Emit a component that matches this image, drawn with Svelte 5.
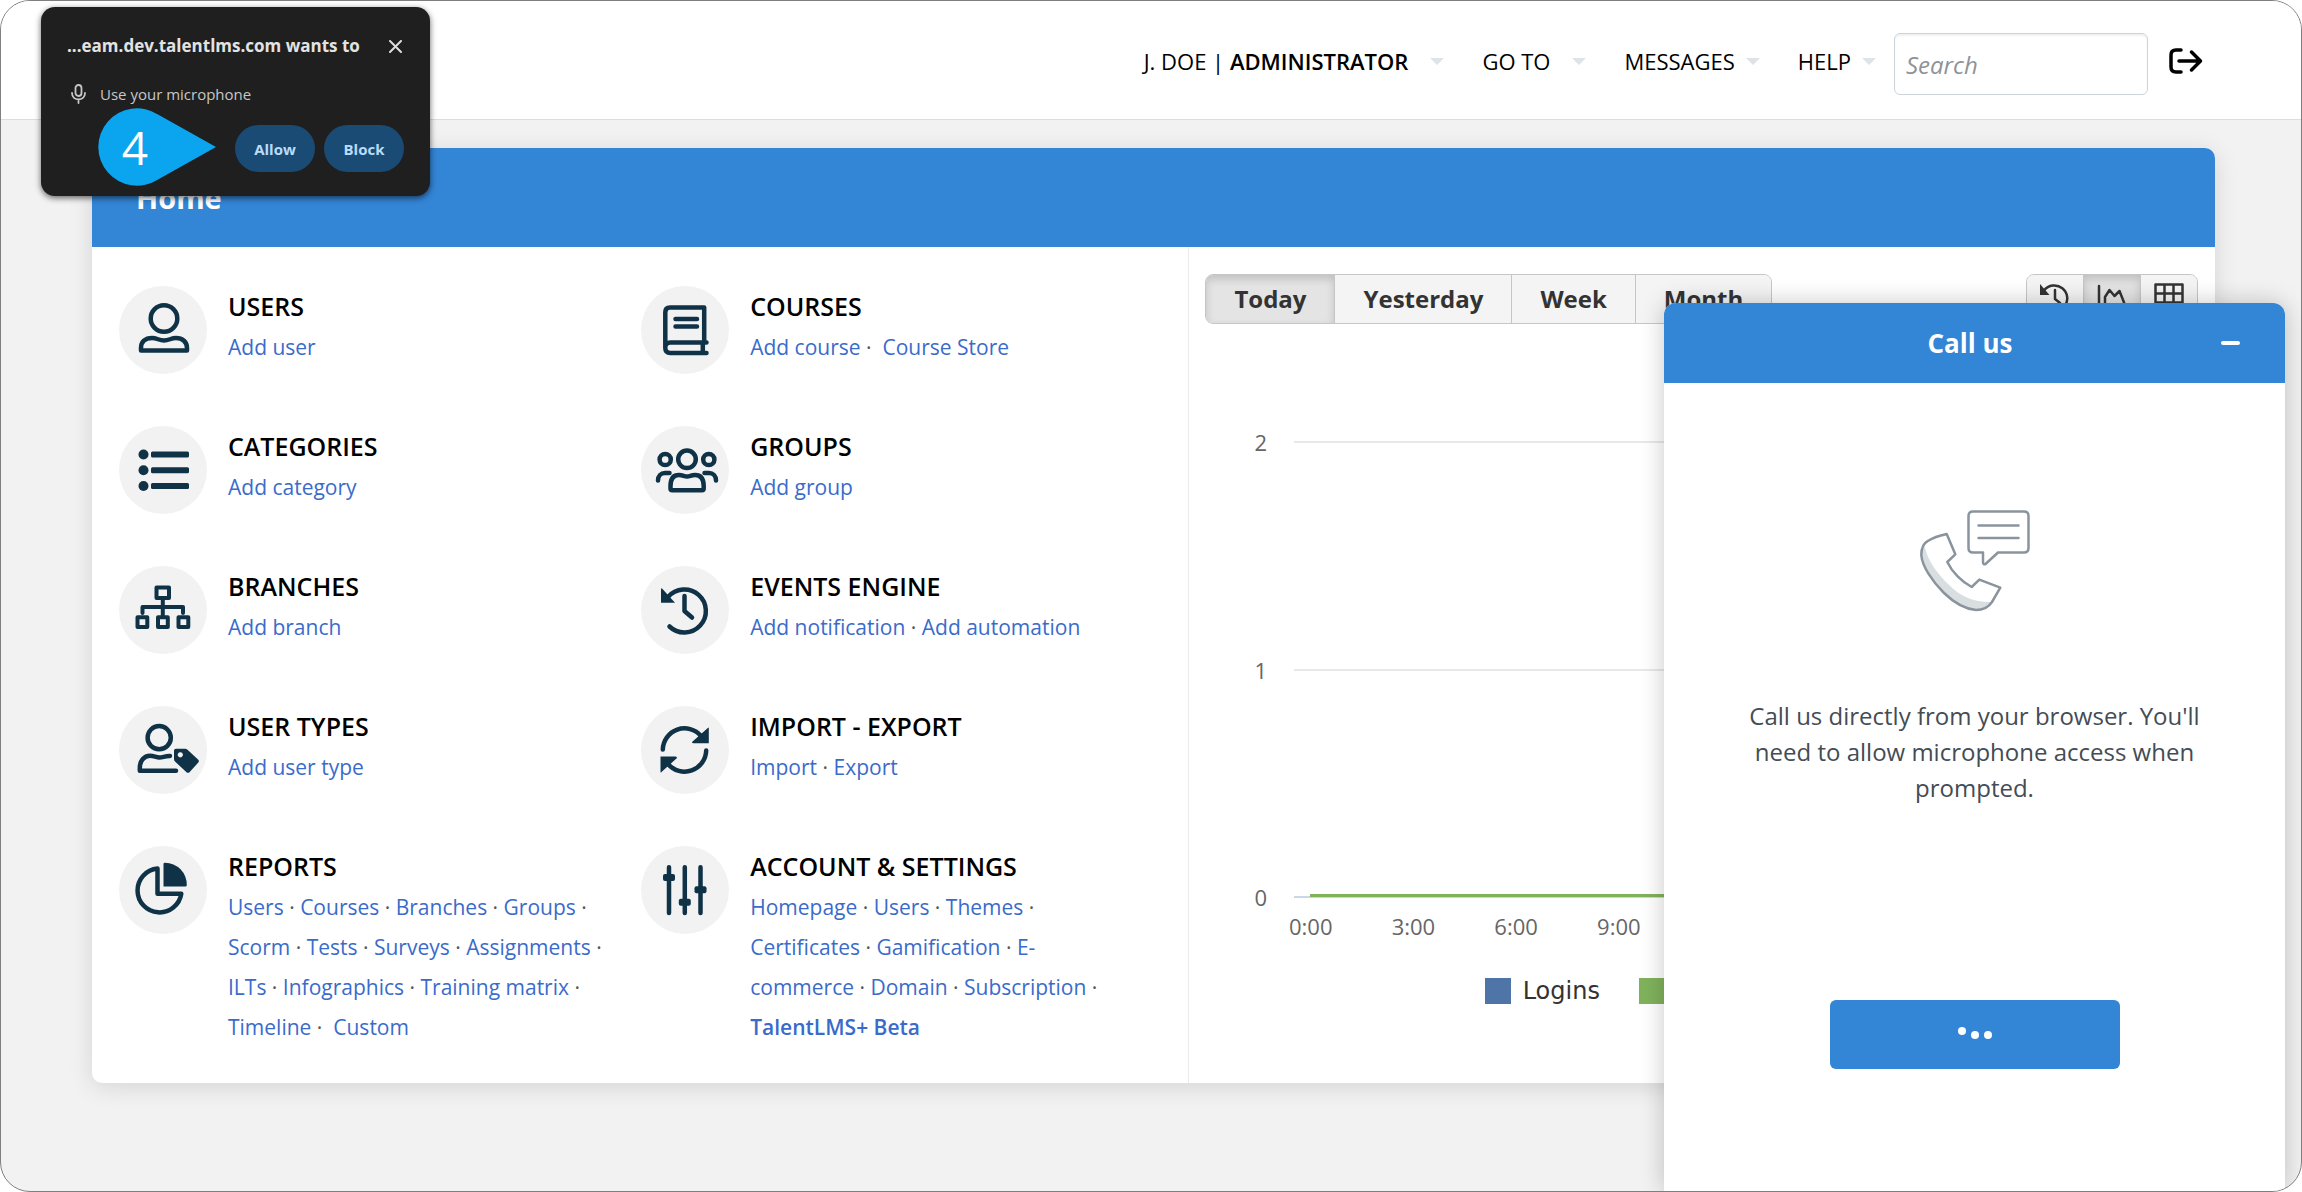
<script lang="ts">
    type TileLink = { label: string; strong?: boolean; wide?: boolean };
    type Tile = { icon: string; title: string; links: TileLink[] };

    const links = (...labels: string[]): TileLink[] =>
        labels.map((label) => ({ label }));

    const tiles: Tile[] = [
        { icon: "user", title: "USERS", links: links("Add user") },
        {
            icon: "book",
            title: "COURSES",
            links: [
                { label: "Add course" },
                { label: "Course Store", wide: true },
            ],
        },
        { icon: "list", title: "CATEGORIES", links: links("Add category") },
        { icon: "group", title: "GROUPS", links: links("Add group") },
        { icon: "tree", title: "BRANCHES", links: links("Add branch") },
        {
            icon: "history",
            title: "EVENTS ENGINE",
            links: links("Add notification", "Add automation"),
        },
        { icon: "usertag", title: "USER TYPES", links: links("Add user type") },
        {
            icon: "sync",
            title: "IMPORT - EXPORT",
            links: links("Import", "Export"),
        },
        {
            icon: "pie",
            title: "REPORTS",
            links: [
                ...links("Users", "Courses", "Branches", "Groups"),
                ...links("Scorm", "Tests", "Surveys", "Assignments"),
                ...links("ILTs", "Infographics", "Training matrix", "Timeline"),
                { label: "Custom", wide: true },
            ],
        },
        {
            icon: "sliders",
            title: "ACCOUNT & SETTINGS",
            links: [
                ...links("Homepage", "Users", "Themes", "Certificates"),
                ...links("Gamification", "E-commerce", "Domain"),
                { label: "Subscription" },
                { label: "TalentLMS+ Beta", strong: true },
            ],
        },
    ];

    const ranges = ["Today", "Yesterday", "Week", "Month"];
    let range = $state("Today");

    const views = ["history", "area", "grid"];
    let view = $state("area");

    const hours = [0, 3, 6, 9, 12, 15, 18, 21];
    let query = $state("");
</script>

{#snippet icon(name: string)}
    <svg class="tile-icon" viewBox="0 0 88 88" aria-hidden="true">
        {#if name === "user"}
            <circle cx="45" cy="32.5" r="13.3" />
            <path
                d="M22 64.5H68V62C68 56 63.5 52 57 52C52 52 50 54.5 45 54.5C40 54.5 38 52 33 52C26 52 22 56 22 62Z"
            />
        {:else if name === "book"}
            <path
                d="M63.2 56.5V21.5H29Q24.3 21.5 24.3 26.2V62Q24.3 67 29.3 67H65.5M24.3 61.5Q24.3 56.5 29.3 56.5H65.5M61.8 56.5V67"
            />
            <path d="M34.5 33H56M34.5 40.5H56" />
        {:else if name === "list"}
            {#each [28.5, 44.3, 60] as y}
                <circle class="solid" cx="24.5" cy={y} r="5" />
                <rect class="solid" x="32" y={y - 3} width="38" height="6" rx="1.5" />
            {/each}
        {:else if name === "group"}
            <circle cx="46" cy="33.3" r="8.8" />
            <circle cx="24.2" cy="33.5" r="5.6" />
            <circle cx="67.8" cy="33.5" r="5.6" />
            <path
                d="M29.5 60C29.5 52 33 49 38 49C42 49 43 50.5 46 50.5C49 50.5 50 49 54 49C59 49 62.7 52 62.7 60V62.5Q62.7 64.2 61 64.2H31.2Q29.5 64.2 29.5 62.5Z"
            />
            <path
                d="M17 54.5C17 50 20 47 24 47H28.5M75 54.5C75 50 72 47 68 47H63.5"
            />
        {:else if name === "tree"}
            <g class="thin">
                <rect x="37.5" y="21.6" width="12.5" height="10.5" />
                <rect x="18.5" y="51.2" width="9.8" height="9.8" />
                <rect x="39" y="51.2" width="9.8" height="9.8" />
                <rect x="59.5" y="51.2" width="9.8" height="9.8" />
                <path d="M43.8 32V50M23.5 47V41H64V47" />
            </g>
        {:else if name === "history"}
            <path d="M27 31A21.5 21.5 0 1 1 28.5 60.5" />
            <path d="M43.5 30V45L51 51.5" />
            <path class="solid" d="M20 23.5Q20 21.5 21.5 23L34 36.7H20Z" />
        {:else if name === "usertag"}
            <circle cx="40.2" cy="31.7" r="11.6" />
            <path
                d="M57 64.8H20.8V62C20.8 55 25 49.8 31 49.8C35 49.8 37 51.5 40.5 51.5C44 51.5 46 49.8 51 50"
            />
            <path
                class="solid"
                fill-rule="evenodd"
                d="M55 44.5Q55 42.7 57 42.7H66Q67.5 42.7 68.5 43.7L79.3 53.7Q80.5 55 79.3 56.5L70.5 66.2Q69 67.5 67.5 66.2L56 55.5Q55 54.5 55 53ZM61.3 46.2A2.6 2.6 0 1 0 61.31 46.2Z"
            />
        {:else if name === "sync"}
            <path d="M21.8 43.5A21.7 21.7 0 0 1 60 30" />
            <path d="M65.2 44.5A21.7 21.7 0 0 1 27 58" />
            <path class="solid" d="M67.8 22Q67.5 21 66.8 22L51 36Q51 37.2 52.5 37.2H67.8Z" />
            <path class="solid" d="M19.5 66Q19.8 67 20.5 66L36 52Q36 50.5 34.5 50.5H19.5Z" />
        {:else if name === "pie"}
            <path d="M38.5 22.5V47.7H62.3A22 22 0 1 1 38.5 22.5Z" />
            <path
                class="solid"
                d="M44.5 18Q44.5 16.7 46 16.7A22 22 0 0 1 67.8 39Q67.8 40.5 66.3 40.5H44.5Z"
            />
        {:else if name === "sliders"}
            <path d="M28 21.3V67M43.8 21.3V67M59.5 21.3V67" />
            <rect class="solid" x="22" y="28" width="12" height="7" rx="2" />
            <rect class="solid" x="37.8" y="52.7" width="12" height="7" rx="2" />
            <rect class="solid" x="53.5" y="40.3" width="12" height="7" rx="2" />
        {/if}
    </svg>
{/snippet}

{#snippet menu(label: string, tight = false)}
    <a class={["menu", { tight }]} href="#menu">
        <span>{label}</span>
        <i class="caret"></i>
    </a>
{/snippet}

<div class="page">
    <header class="topbar">
        <nav class="menus">
            <a class="menu" href="#account">
                <span>J. DOE | <b>ADMINISTRATOR</b></span>
                <i class="caret"></i>
            </a>
            {@render menu("GO TO")}
            {@render menu("MESSAGES", true)}
            {@render menu("HELP", true)}
        </nav>
        <input
            class="search"
            type="text"
            placeholder="Search"
            aria-label="Search"
            bind:value={query}
        />
        <button class="logout" aria-label="Log out">
            <svg viewBox="0 0 34 26">
                <path d="M12 2H7Q2 2 2 7V19Q2 24 7 24H12M10 13H31M22.5 4L31.5 13L22.5 22" />
            </svg>
        </button>
    </header>

    <main class="card">
        <h1>Home</h1>
        <div class="columns">
            <section class="tiles">
                {#each tiles as tile}
                    <div class="tile">
                        <div class="bubble">{@render icon(tile.icon)}</div>
                        <div class="tile-text">
                            <h2>{tile.title}</h2>
                            <p>
                                {#each tile.links as link, i}
                                    {#if i > 0}{link.wide ? " · \u00a0" : " · "}{/if}<a
                                        class:strong={link.strong}
                                        href="#{tile.icon}">{link.label}</a
                                    >
                                {/each}
                            </p>
                        </div>
                    </div>
                {/each}
            </section>

            <section class="stats">
                <div class="toolbar">
                    <div class="segments">
                        {#each ranges as r}
                            <button
                                class:active={range === r}
                                onclick={() => (range = r)}>{r}</button
                            >
                        {/each}
                    </div>
                    <div class="segments icons">
                        {#each views as v}
                            <button
                                class:active={view === v}
                                aria-label={v}
                                onclick={() => (view = v)}
                            >
                                <svg viewBox="0 0 30 30">
                                    {#if v === "history"}
                                        <path d="M4 7.5A13 13 0 1 1 6 25.5M15 7V16L20 20" />
                                        <path class="fill" d="M0 1V12H9.5Z" />
                                    {:else if v === "area"}
                                        <path d="M2 3V27H30M8 22V14L12.5 7L17.5 13L22.5 8L28 22Z" />
                                    {:else}
                                        <path d="M1.5 1.5H28.5V28H1.5ZM1.5 10.5H28.5M1.5 19.5H28.5M10.5 1.5V28M19.5 1.5V28" />
                                    {/if}
                                </svg>
                            </button>
                        {/each}
                    </div>
                </div>

                <div class="chart">
                    <div class="row"><span>2</span><i></i></div>
                    <div class="row"><span>1</span><i></i></div>
                    <div class="row zero"><span>0</span><i></i></div>
                </div>
                <div class="hours">
                    {#each hours as h}<span>{h}:00</span>{/each}
                </div>
                <div class="legend">
                    <span><i class="logins"></i>Logins</span>
                    <span><i class="completions"></i>Course completions</span>
                </div>
            </section>
        </div>
    </main>

    <aside class="call">
        <div class="call-head">
            <h2>Call us</h2>
            <button class="minimize" aria-label="Minimize"></button>
        </div>
        <div class="call-body">
            <svg class="phone" viewBox="0 0 110 102" aria-hidden="true">
                <path
                    class="shade"
                    d="M4.5 36C8 52 18 64 28 74C40 86 52 92 71 92C67 97 62 100 56 100C44 99 33 91.7 24 83C12 71 2 56 1.3 45C1.3 41 2.5 38 4.5 36Z"
                />
                <path
                    d="M26.7 24L35.3 44.3L27.3 52C32 62 42 72 51.7 77L59.3 69.7L80.3 77.7L72 92C68 98 62 100 56 100C44 99 33 91.7 24 83C12 71 2 56 1.3 45C1.3 37 4 33 8.3 30.7C14 27 20 25.5 26.7 24Z"
                />
                <path
                    d="M53 1.5H104Q108.5 1.5 108.5 6V38Q108.5 42.5 104 42.5H78L65.5 54Q63 55 63 52V42.5H53Q48.5 42.5 48.5 38V6Q48.5 1.5 53 1.5ZM58.5 15.5H98.5M58.5 28H98.5"
                />
            </svg>
            <p>
                Call us directly from your browser. You'll need to allow
                microphone access when prompted.
            </p>
            <button class="connect" aria-label="Connecting">
                <i></i><i></i><i></i>
            </button>
        </div>
    </aside>

    <div class="permission" role="dialog" aria-label="Permission request">
        <div class="permission-head">
            <strong>...eam.dev.talentlms.com wants to</strong>
            <button class="close" aria-label="Close">
                <svg viewBox="0 0 13 13"><path d="M1 1L12 12M12 1L1 12" /></svg>
            </button>
        </div>
        <div class="device">
            <svg viewBox="0 0 15 20">
                <rect x="4.5" y="1" width="6" height="11" rx="3" />
                <path d="M1 9C1 17.5 14 17.5 14 9M7.5 15.5V19" />
            </svg>
            <span>Use your microphone</span>
        </div>
        <div class="actions">
            <button>Allow</button>
            <button>Block</button>
        </div>
        <div class="marker">
            <svg viewBox="0 0 118 78">
                <path d="M60 6.5L118 39L60 71.5A38.7 38.7 0 1 1 60 6.5Z" />
            </svg>
            <span>4</span>
        </div>
    </div>
</div>

<style>
    :global(body) {
        background: #fff;
    }

    .page {
        --blue: #3385d6;
        --ink: #0f3247;
        position: relative;
        box-sizing: border-box;
        min-height: 100vh;
        overflow: hidden;
        border: 1px solid #7f7f7f;
        border-radius: 30px;
        background: #f2f2f2;
        font-family: "Open Sans", "Noto Sans", sans-serif;
        font-size: 22px;
        color: #000;
    }

    h1,
    h2,
    p {
        margin: 0;
    }

    a {
        text-decoration: none;
    }

    button {
        font: inherit;
        cursor: pointer;
    }

    svg {
        display: block;
        fill: none;
        stroke-linecap: round;
        stroke-linejoin: round;
    }

    /* Top bar */
    .topbar {
        display: flex;
        justify-content: flex-end;
        align-items: flex-start;
        box-sizing: border-box;
        height: 119px;
        padding: 32px 98px 0;
        border-bottom: 1px solid #d8dfe4;
        background: #fff;
    }

    .menus {
        display: flex;
        gap: 38px;
        margin-right: 18px;
    }

    .menu {
        display: flex;
        align-items: center;
        gap: 22px;
        line-height: 56px;
        white-space: nowrap;
        color: #000;
    }

    .menu.tight {
        gap: 11px;
    }

    .menu b {
        font-weight: 600;
    }

    .caret {
        border: 7px solid transparent;
        border-top-color: #dde3e6;
        border-bottom: 0;
    }

    .search {
        box-sizing: border-box;
        width: 254px;
        height: 62px;
        margin-right: 21px;
        padding: 0 11px;
        border: 1px solid #ccd4d9;
        border-radius: 6px;
        box-shadow: inset 0 2px 2px rgba(0, 0, 0, 0.06);
        font: 24px "Open Sans", sans-serif;
    }

    .search::placeholder {
        font-style: italic;
        color: #8f9396;
    }

    .logout {
        display: flex;
        align-items: center;
        height: 56px;
        padding: 0;
        border: 0;
        background: none;
    }

    .logout svg {
        width: 34px;
        height: 26px;
        stroke: #000;
        stroke-width: 3.5;
    }

    /* Card */
    .card {
        margin: 28px 86px 0 91px;
        border-radius: 10px;
        background: #fff;
        box-shadow: 0 4px 24px rgba(0, 0, 0, 0.12);
    }

    h1 {
        padding: 0 44px;
        border-radius: 10px 10px 0 0;
        background: var(--blue);
        font-size: 29px;
        line-height: 99px;
        color: #fff;
    }

    .columns {
        display: grid;
        grid-template-columns: minmax(0, 1.07fr) minmax(0, 1fr);
    }

    .tiles {
        display: grid;
        grid-template-columns: 1fr 1fr;
        gap: 52px 32px;
        padding: 39px 57px 36px 27px;
        border-right: 1px solid #ececec;
    }

    .tile {
        display: flex;
        gap: 21px;
    }

    .bubble {
        flex: none;
        width: 88px;
        height: 88px;
        border-radius: 50%;
        background: #f2f2f2;
    }

    .tile-icon {
        stroke: var(--ink);
        stroke-width: 4.5;
    }

    .tile-icon .thin {
        stroke-width: 4;
    }

    .tile-icon .solid {
        fill: var(--ink);
        stroke: none;
    }

    .tile-text {
        padding-top: 3px;
    }

    .tile h2 {
        margin-bottom: 4px;
        font-size: 25px;
        font-weight: 600;
        line-height: 34px;
    }

    .tile p {
        font-size: 21px;
        line-height: 40px;
        color: #555;
    }

    .tile a {
        color: #3a6bcb;
    }

    .tile .strong {
        font-weight: 600;
    }

    /* Statistics */
    .stats {
        padding: 27px 17px 0 16px;
    }

    .toolbar {
        display: flex;
        justify-content: space-between;
    }

    .segments {
        display: flex;
        box-sizing: border-box;
        height: 50px;
        overflow: hidden;
        border: 1px solid #c6c6c6;
        border-radius: 8px;
    }

    .segments button {
        padding: 0 28px 2px;
        border: 0;
        border-left: 1px solid #c6c6c6;
        background: #f4f4f4;
        font-size: 24px;
        font-weight: 700;
        color: #333;
    }

    .segments button:first-child {
        border-left: 0;
    }

    .segments .active {
        background: #e4e4e4;
        box-shadow: inset 0 4px 8px rgba(0, 0, 0, 0.16);
    }

    .segments.icons button {
        padding: 0 13px 2px;
    }

    .icons svg {
        width: 30px;
        height: 30px;
        stroke: #333;
        stroke-width: 2.5;
    }

    .icons .fill {
        fill: #333;
        stroke: none;
    }

    .chart {
        display: flex;
        flex-direction: column;
        justify-content: space-between;
        height: 485px;
        margin-top: 103px;
        padding: 0 16px 0 49px;
    }

    .row {
        display: flex;
        align-items: center;
        gap: 27px;
        line-height: 30px;
        color: #666;
    }

    .row i {
        flex: 1;
        height: 2px;
        background: #e8e8e8;
    }

    .row.zero i {
        background: #ccd6eb;
    }

    .row.zero i::before {
        content: "";
        display: block;
        height: 3px;
        margin: -2px 16px 0;
        background: #80b25c;
    }

    .hours {
        display: grid;
        grid-template-columns: repeat(8, 1fr);
        padding: 0 117px 0 54px;
        line-height: 28px;
        text-align: center;
        color: #666;
    }

    .legend {
        display: flex;
        justify-content: center;
        gap: 39px;
        margin-top: 34px;
        padding-right: 4px;
        font: 24px/34px "DejaVu Sans", sans-serif;
        color: #333;
    }

    .legend span {
        display: flex;
        align-items: center;
        gap: 12px;
    }

    .legend i {
        width: 26px;
        height: 26px;
    }

    .logins {
        background: #4f74a8;
    }

    .completions {
        background: #80b25c;
    }

    /* Call widget, docked to the bottom right */
    .call {
        position: absolute;
        right: 16px;
        bottom: 0;
        width: 621px;
        border-radius: 12px 12px 0 0;
        background: #fff;
        box-shadow: 0 0 24px rgba(0, 0, 0, 0.22);
    }

    .call-head {
        display: flex;
        align-items: center;
        height: 80px;
        padding: 0 45px 0 55px;
        border-radius: 12px 12px 0 0;
        background: var(--blue);
        color: #fff;
    }

    .call-head h2 {
        flex: 1;
        font-size: 26px;
        line-height: 36px;
        text-align: center;
    }

    .minimize {
        width: 19px;
        height: 4px;
        padding: 0;
        border: 0;
        border-radius: 2px;
        background: #fff;
    }

    .call-body {
        display: flex;
        flex-direction: column;
        align-items: center;
        padding: 127px 80px 122px;
    }

    .phone {
        width: 110px;
        height: 102px;
        stroke: #8a949f;
        stroke-width: 2.5;
    }

    .phone .shade {
        fill: #d9dee1;
        stroke: none;
    }

    .call p {
        margin: 86px 0 194px;
        font-size: 24px;
        line-height: 36px;
        text-align: center;
        color: #444c55;
    }

    .connect {
        display: flex;
        justify-content: center;
        align-items: center;
        gap: 5px;
        width: 290px;
        height: 69px;
        border: 0;
        border-radius: 6px;
        background: var(--blue);
    }

    .connect i {
        width: 8px;
        height: 8px;
        border-radius: 50%;
        background: #fff;
    }

    .connect i:first-child {
        margin-bottom: 8px;
    }

    /* Browser permission prompt */
    .permission {
        position: absolute;
        top: 6px;
        left: 40px;
        box-sizing: border-box;
        width: 389px;
        height: 189px;
        padding: 24px 26px;
        border-radius: 14px;
        background: #1f1f1f;
        box-shadow: 0 2px 6px rgba(0, 0, 0, 0.6);
        color: #e3e3e3;
    }

    .permission-head {
        display: flex;
        justify-content: space-between;
        font-size: 17px;
        line-height: 30px;
        white-space: nowrap;
    }

    .permission strong {
        font-weight: 700;
    }

    .close {
        width: 15px;
        padding: 0;
        border: 0;
        background: none;
    }

    .close svg {
        width: 13px;
        height: 13px;
        stroke: #ddd;
        stroke-width: 2;
    }

    .device {
        display: flex;
        align-items: center;
        gap: 14px;
        margin: 20px 0 18px 4px;
        font-size: 15px;
        line-height: 26px;
        color: #c7c7c7;
    }

    .device svg {
        width: 15px;
        height: 20px;
        stroke: #c7c7c7;
        stroke-width: 1.8;
    }

    .actions {
        display: flex;
        justify-content: flex-end;
        gap: 9px;
    }

    .actions button {
        width: 80px;
        height: 47px;
        padding: 0;
        border: 0;
        border-radius: 24px;
        background: #194b75;
        font-size: 15px;
        font-weight: 700;
        color: #b8dcfa;
    }

    .marker {
        position: absolute;
        top: 101px;
        left: 57px;
        width: 118px;
    }

    .marker svg {
        fill: #0aa5ee;
    }

    .marker span {
        position: absolute;
        inset: 0 44px 0 0;
        font-size: 46px;
        line-height: 78px;
        text-align: center;
        color: #fff;
    }
</style>
